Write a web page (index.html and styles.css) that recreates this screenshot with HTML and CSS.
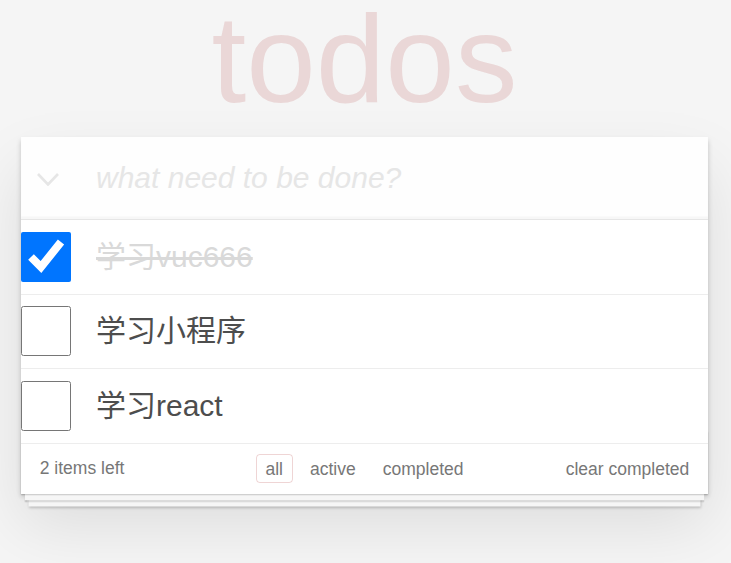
FILE: index.html
```html
<!DOCTYPE html>
<html lang="zh">
<head>
<meta charset="utf-8">
<title>todos</title>
<link rel="stylesheet" href="styles.css">
</head>
<body>
<div class="page">
  <h1 class="title">todos</h1>
  <section class="todoapp">
    <header class="header">
      <div class="toggle-all">
        <svg width="24" height="16" viewBox="0 0 24 16"><polyline points="2,4 12,14.5 22,4" fill="none" stroke="#e6e6e6" stroke-width="2.6"/></svg>
      </div>
      <input class="new-todo" type="text" placeholder="what need to be done?">
    </header>
    <ul class="todo-list">
      <li class="todo completed">
        <input class="toggle" type="checkbox" checked>
        <label class="todo-label">学习vuc666</label>
      </li>
      <li class="todo">
        <input class="toggle" type="checkbox">
        <label class="todo-label">学习小程序</label>
      </li>
      <li class="todo">
        <input class="toggle" type="checkbox">
        <label class="todo-label">学习react</label>
      </li>
    </ul>
    <footer class="footer">
      <span class="todo-count">2 items left</span>
      <ul class="filters">
        <li><a class="filter selected" href="#/all">all</a></li>
        <li><a class="filter" href="#/active">active</a></li>
        <li><a class="filter" href="#/completed">completed</a></li>
      </ul>
      <button class="clear-completed">clear completed</button>
    </footer>
  </section>
</div>
</body>
</html>
```

FILE: styles.css
```css
html {
  background: #f5f5f5;
}
html, body {
  margin: 0;
  padding: 0;
}
body {
  min-height: 100vh;
  padding-right: 2px;
  background: #f5f5f5;
  color: #4d4d4d;
  font-family: "Liberation Sans", Arial, "Noto Sans CJK SC", sans-serif;
  font-weight: 400;
}
.page {
  max-width: 687px;
  min-width: 287px;
  margin: 0 auto;
}
.title {
  margin: 0;
  font-size: 125px;
  line-height: 117px;
  font-weight: 400;
  text-align: center;
  color: rgba(175, 47, 47, 0.15);
}
.todoapp {
  position: relative;
  margin: 20px 0 0 0;
  background: #fff;
  box-shadow: 0 2.5px 5px 0 rgba(0, 0, 0, 0.2), 0 31px 62px 0 rgba(0, 0, 0, 0.1);
}
.header {
  display: flex;
  align-items: center;
  background: rgba(0, 0, 0, 0.003);
  box-shadow: inset 0 -2.5px 1.25px rgba(0, 0, 0, 0.03);
}
.toggle-all {
  width: 75px;
  flex: none;
  display: flex;
  justify-content: flex-start;
  padding-left: 15px;
  box-sizing: border-box;
}
.toggle-all svg {
  display: block;
}
.new-todo {
  flex: 1;
  min-width: 0;
  margin: 0;
  border: none;
  outline: none;
  background: transparent;
  padding: 20px 20px 20px 0;
  font-family: inherit;
  font-size: 30px;
  line-height: 42px;
  height: 82px;
  box-sizing: border-box;
  color: inherit;
}
.new-todo::placeholder {
  font-style: italic;
  color: #e6e6e6;
}
.todo-list {
  margin: 0;
  padding: 0;
  list-style: none;
  border-top: 1px solid #e6e6e6;
}
.todo {
  display: flex;
  align-items: center;
  border-bottom: 1px solid #ededed;
  font-size: 30px;
}
.toggle {
  width: 50px;
  height: 50px;
  margin: 0;
  flex: none;
}
.todo-label {
  display: block;
  flex: 1;
  padding: 18.75px 18.75px 18.75px 25px;
  line-height: 36px;
  color: #4d4d4d;
  word-break: break-all;
}
.todo.completed .todo-label {
  color: #d9d9d9;
  text-decoration: line-through;
}
.footer {
  position: relative;
  display: grid;
  grid-template-columns: 1fr auto 1fr;
  align-items: center;
  height: 50px;
  box-sizing: border-box;
  padding: 0 18.75px;
  color: #777;
  font-size: 17.5px;
}
.footer::before {
  content: "";
  position: absolute;
  right: 0;
  bottom: 0;
  left: 0;
  height: 62.5px;
  overflow: hidden;
  box-shadow: 0 1.25px 1.25px rgba(0, 0, 0, 0.2),
              0 10px 0 -3.75px #f6f6f6,
              0 11.25px 1.25px -3.75px rgba(0, 0, 0, 0.2),
              0 20px 0 -7.5px #f6f6f6,
              0 21.25px 2.5px -7.5px rgba(0, 0, 0, 0.2);
  pointer-events: none;
}
.todo-count {
  justify-self: start;
  position: relative;
}
.filters {
  display: flex;
  margin: 0;
  padding: 0;
  list-style: none;
  position: relative;
}
.filter {
  display: block;
  margin: 3.75px;
  padding: 3.75px 8.75px;
  line-height: 20px;
  color: inherit;
  text-decoration: none;
  border: 1px solid transparent;
  border-radius: 3.75px;
}
.filter.selected {
  border-color: rgba(175, 47, 47, 0.2);
}
.clear-completed {
  justify-self: end;
  position: relative;
  margin: 0;
  padding: 0;
  border: 0;
  background: none;
  font-family: inherit;
  font-size: 17.5px;
  color: #777;
  line-height: 20px;
  cursor: pointer;
}
```
